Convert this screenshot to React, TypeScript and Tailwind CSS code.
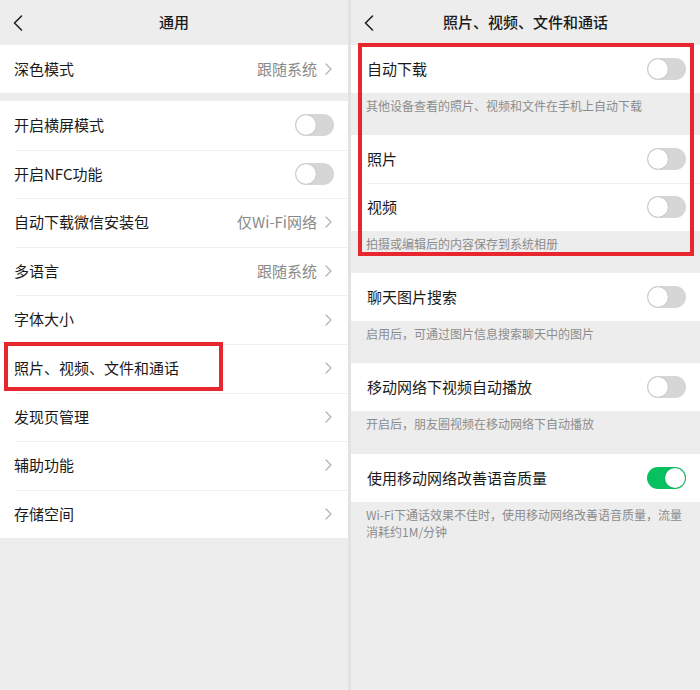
const font = { fontFamily: '"Noto Sans CJK SC", "Noto Sans", sans-serif' };

const BackIcon = () => (
  <svg width="10" height="16" viewBox="0 0 10 16" fill="none">
    <path d="M8.5 1 L1.5 8 L8.5 15" stroke="#222" strokeWidth="1.6" strokeLinecap="round" strokeLinejoin="round" />
  </svg>
);

const Chevron = () => (
  <svg width="7" height="12" viewBox="0 0 7 12" fill="none">
    <path d="M1 1 L6 6 L1 11" stroke="#b3b3b3" strokeWidth="1.3" strokeLinecap="round" strokeLinejoin="round" />
  </svg>
);

const Toggle = ({ on = false }: { on?: boolean }) => (
  <div
    className={`w-[39px] h-[22px] rounded-full flex items-center px-[1px] ${
      on ? "bg-[#07c160] justify-end" : "bg-[#d6d6d6] justify-start"
    }`}
  >
    <div className="w-[20px] h-[20px] rounded-full bg-white shadow-[0_0_1px_rgba(0,0,0,0.35)]" />
  </div>
);

const Header = ({ title }: { title: string }) => (
  <div className="h-[45px] flex items-center relative px-[13px]">
    <BackIcon />
    <div className="flex-1 text-center text-[15px] font-medium text-[#1a1a1a] pr-[10px]">{title}</div>
  </div>
);

type LeftRow = { label: string; value?: string; toggle?: boolean; boxed?: boolean };

const leftRows: LeftRow[] = [
  { label: "开启横屏模式", toggle: true },
  { label: "开启NFC功能", toggle: true },
  { label: "自动下载微信安装包", value: "仅Wi-Fi网络" },
  { label: "多语言", value: "跟随系统" },
  { label: "字体大小" },
  { label: "照片、视频、文件和通话", boxed: true },
  { label: "发现页管理" },
  { label: "辅助功能" },
  { label: "存储空间" },
];

const LeftItem = ({ row, first }: { row: LeftRow; first?: boolean }) => (
  <div className="relative h-[48.6px] bg-white">
    {!first && <div className="absolute top-0 left-[16px] right-0 h-px bg-[#f0f0f0]" />}
    <div className={`h-full flex items-center pl-[14px] ${row.toggle ? "pr-[14px]" : "pr-[16px]"}`}>
      <span className="flex-1 text-[15px] text-[#1a1a1a]">{row.label}</span>
      {row.toggle ? (
        <Toggle />
      ) : (
        <div className="flex items-center gap-[8px]">
          {row.value && <span className="text-[15px] text-[#8a8a8a]">{row.value}</span>}
          <Chevron />
        </div>
      )}
    </div>
    {row.boxed && (
      <div className="absolute left-[4px] top-[-2px] w-[219px] h-[49px] border-[4px] border-[#e8262d]" />
    )}
  </div>
);

const RightRow = ({ label, on, divider }: { label: string; on?: boolean; divider?: boolean }) => (
  <div className="relative h-[48px] bg-white flex items-center pl-[16px] pr-[14px]">
    {divider && <div className="absolute top-0 left-[16px] right-0 h-px bg-[#f0f0f0]" />}
    <span className="flex-1 text-[15px] text-[#1a1a1a]">{label}</span>
    <Toggle on={on} />
  </div>
);

const Note = ({ children, h = "h-[42px]" }: { children: React.ReactNode; h?: string }) => (
  <div className={`${h} pl-[15px] pr-[12px] pt-[4px] text-[12px] leading-[17px] text-[#8c8c8c]`}>{children}</div>
);

export default function App() {
  return (
    <div className="w-[700px] h-[690px] bg-[#ededed] flex overflow-hidden" style={font}>
      {/* left panel */}
      <div className="w-[348px] flex flex-col">
        <Header title="通用" />
        <div className="h-[48px] bg-white flex items-center pl-[14px] pr-[16px]">
          <span className="flex-1 text-[15px] text-[#1a1a1a]">深色模式</span>
          <div className="flex items-center gap-[8px]">
            <span className="text-[15px] text-[#8a8a8a]">跟随系统</span>
            <Chevron />
          </div>
        </div>
        <div className="h-[8px]" />
        <div>
          {leftRows.map((r, i) => (
            <LeftItem key={r.label} row={r} first={i === 0} />
          ))}
        </div>
      </div>

      {/* divider */}
      <div className="w-[3px] bg-[#e2e2e2]" />

      {/* right panel */}
      <div className="flex-1 flex flex-col">
        <Header title="照片、视频、文件和通话" />
        <div className="relative">
          <RightRow label="自动下载" />
          <Note>其他设备查看的照片、视频和文件在手机上自动下载</Note>
          <RightRow label="照片" />
          <RightRow label="视频" divider />
          <Note>拍摄或编辑后的内容保存到系统相册</Note>
          <div className="absolute left-[7px] right-[6px] top-[-2px] h-[213px] border-[4px] border-[#e8262d]" />
        </div>
        <RightRow label="聊天图片搜索" />
        <Note>启用后，可通过图片信息搜索聊天中的图片</Note>
        <RightRow label="移动网络下视频自动播放" />
        <Note h="h-[43px]">开启后，朋友圈视频在移动网络下自动播放</Note>
        <RightRow label="使用移动网络改善语音质量" on />
        <Note h="h-[60px]">Wi-Fi下通话效果不佳时，使用移动网络改善语音质量，流量消耗约1M/分钟</Note>
      </div>
    </div>
  );
}
